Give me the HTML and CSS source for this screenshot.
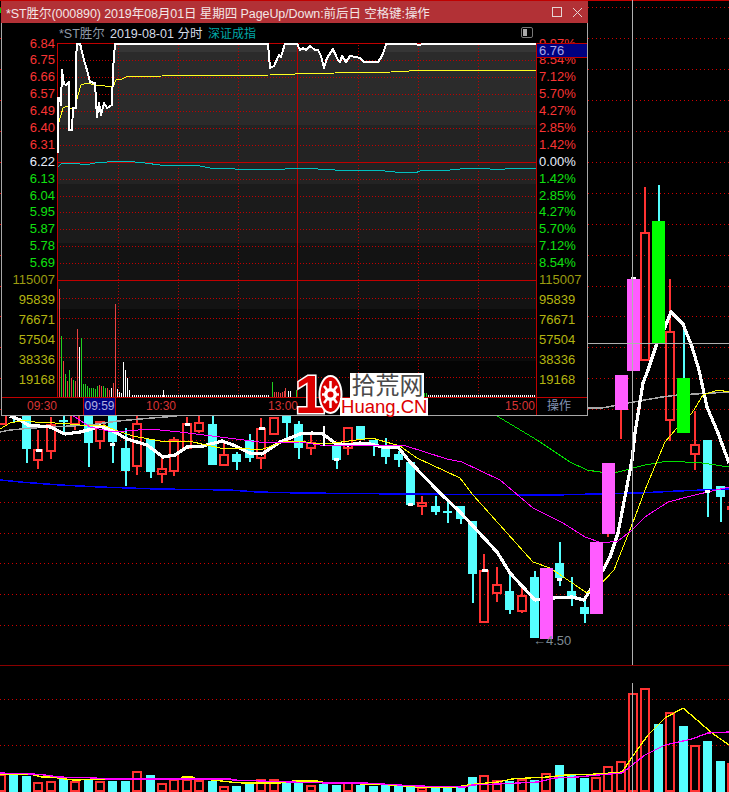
FILE: index.html
```html
<!DOCTYPE html>
<html lang="zh-CN">
<head>
<meta charset="utf-8">
<title>*ST胜尔 K线</title>
<link rel="stylesheet" href="styles.css">
</head>
<body>
<main class="screen">
  <svg class="kline" viewBox="0 0 729 792" width="729" height="792" aria-hidden="true">
    <defs>
      <pattern id="bgdot" width="4" height="1" patternUnits="userSpaceOnUse"><rect width="1" height="1" class="bgdot"/></pattern>
    </defs>
    <rect x="0" y="0" width="729" height="1" class="edge"/>
    <rect x="0" y="8" width="1" height="5" class="mark"/>
    <path fill="url(#bgdot)" d="M0 7h729v1h-729zM0 38h729v1h-729zM0 69h729v1h-729zM0 100h729v1h-729zM0 131h729v1h-729zM0 162h729v1h-729zM0 193h729v1h-729zM0 224h729v1h-729zM0 255h729v1h-729zM0 286h729v1h-729zM0 316h729v1h-729zM0 347h729v1h-729zM0 378h729v1h-729zM0 409h729v1h-729zM0 440h729v1h-729zM0 471h729v1h-729zM0 502h729v1h-729zM0 533h729v1h-729zM0 563h729v1h-729zM0 594h729v1h-729zM0 625h729v1h-729zM0 699h729v1h-729zM0 745h729v1h-729z"/>
    <rect x="0" y="665" width="729" height="1" class="rule"/>
    <path class="cy" d="M13 416h2v7h-2zM22 416h9v33h-9zM26 449h2v14h-2zM63 415h2v18h-2zM59 420h9v2h-9zM84 416h9v27h-9zM88 443h2v24h-2zM108 416h9v26h-9zM112 442h2v21h-2zM121 448h9v23h-9zM125 428h2v58h-2zM146 439h9v33h-9zM150 472h2v6h-2zM208 424h9v41h-9zM212 415h2v9h-2zM232 454h9v8h-9zM236 452h2v18h-2zM245 440h9v18h-9zM249 434h2v28h-2zM282 416h9v7h-9zM286 423h2v15h-2zM294 424h9v24h-9zM298 421h2v38h-2zM332 446h9v14h-9zM336 460h2v9h-2zM356 426h9v14h-9zM369 440h9v6h-9zM373 446h2v10h-2zM381 446h9v11h-9zM385 438h2v26h-2zM394 454h9v6h-9zM398 451h2v16h-2zM406 462h9v43h-9zM431 506h9v6h-9zM435 496h2v19h-2zM443 511h9v2h-9zM447 500h2v23h-2zM456 506h9v13h-9zM460 519h2v5h-2zM468 521h9v53h-9zM472 574h2v29h-2zM505 591h9v19h-9zM509 574h2v40h-2zM530 577h9v61h-9zM534 571h2v6h-2zM555 563h9v15h-9zM559 542h2v44h-2zM567 591h9v6h-9zM571 577h2v29h-2zM580 607h9v7h-9zM584 597h2v26h-2zM703 440h9v50h-9zM707 493h2v24h-2zM716 486h9v11h-9zM720 497h2v25h-2zM683 325h2v53h-2zM658 185h2v36h-2z"/>
    <path class="cy" d="M9 775h9v17h-9zM22 776h9v16h-9zM59 779h9v13h-9zM84 779h9v13h-9zM108 781h9v11h-9zM121 781h9v11h-9zM146 775h9v17h-9zM208 781h9v11h-9zM232 786h9v6h-9zM245 784h9v8h-9zM282 783h9v9h-9zM294 783h9v9h-9zM319 784h9v8h-9zM332 785h9v7h-9zM356 785h9v7h-9zM369 786h9v6h-9zM381 785h9v7h-9zM394 785h9v7h-9zM406 785h9v7h-9zM431 787h9v5h-9zM443 787h9v5h-9zM456 787h9v5h-9zM468 777h9v15h-9zM505 781h9v11h-9zM530 780h9v12h-9zM555 765h9v27h-9zM567 775h9v17h-9zM580 778h9v14h-9zM654 724h9v68h-9zM679 726h9v66h-9zM703 741h9v51h-9zM716 761h9v31h-9z"/>
    <path class="rd" d="M-1 416V424H6V416M38 430V450M34 450h8v10h-8zM38 460V469M47 425h8v26h-8zM51 417V425M51 451V459M71 416V424H79V416M75 424V430M96 422h8v19h-8zM100 441V449M133 424h8v42h-8zM137 415V424M137 466V475M158 469h8v5h-8zM162 456V469M162 474V483M170 440h8v31h-8zM174 437V440M174 471V476M183 424h8v24h-8zM187 417V424M195 423h8v8h-8zM199 415V423M199 431V433M220 455h8v10h-8zM224 443V455M257 429h8v29h-8zM261 418V429M261 458V469M270 418h8v16h-8zM307 443h8v5h-8zM311 434V443M311 448V455M344 428h8v20h-8zM348 448V455M418 503h8v3h-8zM422 496V503M422 506V515M480 571h8v51h-8zM484 554V571M493 585h8v8h-8zM497 567V585M497 593V602M518 596h8v15h-8zM522 587V596M522 611V613M641 233h8v127h-8zM645 187V233M666 332h8v88h-8zM670 279V332M670 420V441M691 445h8v9h-8zM695 411V445M695 454V470M608 534V537M621 410V439"/>
    <path class="rd" d="M-2 775h7V791h-7zM34 783h8V791h-8zM47 782h8V791h-8zM71 782h8V791h-8zM96 782h8V791h-8zM133 772h8V791h-8zM158 784h8V791h-8zM170 780h8V791h-8zM183 780h8V791h-8zM195 781h8V791h-8zM220 787h8V791h-8zM257 780h8V791h-8zM270 780h8V791h-8zM307 786h8V791h-8zM344 783h8V791h-8zM418 788h8V791h-8zM480 776h8V791h-8zM493 781h8V791h-8zM518 780h8V791h-8zM542 774h8V791h-8zM592 778h8V791h-8zM604 767h8V791h-8zM617 762h8V791h-8zM629 694h8V791h-8zM641 689h8V791h-8zM666 713h8V791h-8zM691 746h8V791h-8zM728 764h8V791h-8z"/>
    <path class="gy" d="M0 432L10 430L33 428L90 425L118 421L140 419L177 416M588 408L602 408L628 403L662 397L678 395L729 392"/>
    <path class="gn" d="M497 416L537 440L570 462L587 470L600 472L618 472L645 465L668 461L702 463L729 467"/>
    <path class="bl" d="M0 480L20 482L60 485L100 487L157 489L230 490L257 492L300 493L403 494L553 495L638 493L678 491L729 489"/>
    <path class="ma5" d="M10 416L20 420L28 425L50 427L65 434L80 432L88 430L100 426L115 432L127 439L147 445L163 457L175 455L187 447L203 446L222 441L233 445L250 453L262 454L280 442L300 434L312 433L323 434L335 443L348 445L360 443L370 444L383 447L398 447L410 462L440 493L460 512L497 552L510 573L535 600L553 598L572 597L584 600L589 592L603 570L610 557L618 533L623 507L632 460L635 433L643 383L648 370L657 343L665 327L671 312L683 324L692 347L699 370L707 407L718 433L729 463"/>
    <path class="ye" d="M0 429L10 423L25 420L35 422L55 423L70 424L90 426L103 425L115 430L133 436L160 441L193 442L220 448L250 449L263 449L283 442L300 441L317 444L333 443L372 438L400 446L417 458L460 478L473 495L507 533L533 562L550 568L587 593L600 585L614 570L635 517L645 490L665 442L677 428L692 413L703 395L718 390L729 392"/>
    <path class="mg" d="M72 415L90 427L113 432L150 429L180 432L220 437L267 443L300 442L320 445L403 445L447 459L462 462L500 480L533 508L563 523L585 537L602 543L618 541L632 530L645 517L668 502L695 495L729 487"/>
    <path class="ye low-line" d="M0 774L30 774L42 777L48 777L58 778L73 780L133 779L180 779L182 777L192 777L197 779L213 780L230 782L243 783L280 783L293 781L317 781L328 783L365 784L392 785L417 787L455 787L475 784L498 782L512 779L528 778L548 777L565 775L598 774L622 772L635 753L648 735L665 718L683 708L712 733L729 745"/>
    <path class="mg low-line" d="M0 773L33 774L45 775L58 777L95 778L107 779L193 779L230 779L233 780L290 782L327 783L365 783L417 786L465 787L472 785L498 784L538 782L555 778L578 777L598 775L622 773L645 755L665 745L692 739L708 733L729 732"/>
    <path class="pk" d="M540 568h13v71h-13zM590 542h13v72h-13zM602 463h13v71h-13zM615 375h13v35h-13zM627 279h13v92h-13z"/>
    <path class="gb" d="M652 221h13v122h-13zM677 378h13v55h-13z"/>
    <rect x="727" y="506" width="2" height="4" class="rf"/>
    <path class="wm" d="M36 449h6v3h-6zM110 443h5v3h-5zM185 423h5v3h-5zM259 427h6v3h-6zM334 458h5v3h-5zM408 503h5v3h-5zM482 569h6v3h-6zM557 578h5v3h-5zM705 490h5v3h-5zM323 426h2v20h-2zM631 277h5v2h-5z"/>
    <path class="cross" d="M632 0h1v665h-1zM632 683h1v109h-1zM588 343h141v1h-141z"/>
    <text x="533" y="645" class="low">←4.50</text>
  </svg>

  <section class="win">
    <header class="title">
      <span class="title-text">*ST胜尔(000890) 2019年08月01日 星期四 PageUp/Down:前后日 空格键:操作</span>
      <div class="win-btns">
        <svg width="11" height="11" viewBox="0 0 11 11"><rect x="0.5" y="0.5" width="9" height="9" class="btn-line"/></svg>
        <svg width="11" height="11" viewBox="0 0 11 11"><path d="M1 1L10 10M10 1L1 10" class="btn-line"/></svg>
      </div>
    </header>
    <div class="content">
      <div class="sub">
        <span class="sub-name">*ST胜尔</span>
        <span class="sub-date">2019-08-01 分时</span>
        <span class="sub-index">深证成指</span>
        <svg class="sub-icon" width="12" height="11" viewBox="0 0 12 11"><rect x="0.5" y="0.5" width="11" height="10" rx="1.5" class="ic-box"/><rect x="2" y="2" width="4" height="7" class="ic-fill"/></svg>
      </div>
      <div class="body">
        <div class="axis axis-left">
          <span class="up">6.84</span><span class="up">6.75</span><span class="up">6.66</span><span class="up">6.57</span><span class="up">6.49</span><span class="up">6.40</span><span class="up">6.31</span><span class="flat">6.22</span><span class="dn">6.13</span><span class="dn">6.04</span><span class="dn">5.95</span><span class="dn">5.87</span><span class="dn">5.78</span><span class="dn">5.69</span>
          <span class="vol-top">115007</span><span class="vol">95839</span><span class="vol">76671</span><span class="vol">57504</span><span class="vol">38336</span><span class="vol">19168</span>
        </div>
        <svg class="plot" viewBox="57 43 480 354" width="480" height="354" aria-hidden="true">
          <defs>
            <pattern id="pdh" width="3" height="1" patternUnits="userSpaceOnUse"><rect width="1" height="1" class="pdot"/></pattern>
            <pattern id="pdv" width="1" height="3" patternUnits="userSpaceOnUse"><rect width="1" height="1" class="pdot"/></pattern>
            <pattern id="vd" width="2" height="1" patternUnits="userSpaceOnUse"><rect width="1" height="1" class="vdot"/></pattern>
          </defs>
          <rect x="57" y="43" width="480" height="9" class="b1"/>
          <rect x="57" y="52" width="480" height="73" class="b2"/>
          <rect x="57" y="125" width="480" height="59" class="b3"/>
          <rect x="57" y="184" width="480" height="59" class="b4"/>
          <rect x="57" y="243" width="480" height="66" class="b5"/>
          <rect x="57" y="309" width="480" height="52" class="b6"/>
          <rect x="57" y="361" width="480" height="36" class="b7"/>
          <path class="sky" d="M58 153L58 98L60 98L61 105L62 70L64 84L66 85L69 82L69 130L72 130L73 108L76 108L76 60L77 43L80 43L84 60L87 70L90 82L95 83L96 100L97 117L99 103L101 115L104 103L107 108L112 105L113 70L115 43L57 43Z"/>
          <path class="sky" d="M268 43L270 68L274 66L279 55L281 57L285 43L297 43L300 50L303 48L306 50L310 46L315 50L318 50L321 56L324 68L327 58L333 49L338 60L340 62L342 56L346 62L350 56L356 57L360 58L364 62L378 62L382 56L385 48L386 43Z"/>
          <path fill="url(#pdh)" d="M57 60h479v1h-479zM57 77h479v1h-479zM57 94h479v1h-479zM57 111h479v1h-479zM57 128h479v1h-479zM57 145h479v1h-479zM57 179h479v1h-479zM57 196h479v1h-479zM57 212h479v1h-479zM57 229h479v1h-479zM57 246h479v1h-479zM57 263h479v1h-479zM57 298h479v1h-479zM57 318h479v1h-479zM57 338h479v1h-479zM57 357h479v1h-479zM57 377h479v1h-479z"/>
          <path fill="url(#pdv)" d="M118 43h1v354h-1zM178 43h1v354h-1zM238 43h1v354h-1zM358 43h1v354h-1zM418 43h1v354h-1zM478 43h1v354h-1z"/>
          <path class="prule" d="M57 43h480v1h-480zM57 162h480v1h-480zM57 280h480v1h-480zM57 43h1v354h-1zM297 43h1v354h-1zM536 43h1v354h-1z"/>
          <path class="v-r" d="M59 289h1v108h-1zM63 361h1v36h-1zM67 381h1v16h-1zM71 378h1v19h-1zM75 381h1v16h-1zM77 329h1v68h-1zM99 385h1v12h-1zM101 386h1v11h-1zM107 388h1v9h-1zM109 390h1v7h-1zM113 383h1v14h-1zM115 304h1v93h-1zM274 392h1v5h-1zM276 392h1v5h-1zM278 392h1v5h-1zM280 393h1v4h-1zM282 392h1v5h-1zM284 391h1v6h-1zM285 388h1v9h-1z"/>
          <path class="v-g" d="M61 336h1v61h-1zM65 374h1v23h-1zM69 370h1v27h-1zM73 380h1v17h-1zM81 338h1v59h-1zM83 384h1v13h-1zM85 384h1v13h-1zM87 386h1v11h-1zM89 388h1v9h-1zM91 388h1v9h-1zM93 388h1v9h-1zM95 389h1v8h-1zM97 386h1v11h-1zM103 386h1v11h-1zM105 388h1v9h-1zM272 382h1v15h-1zM296 390h1v7h-1zM424 393h1v4h-1zM426 393h1v4h-1z"/>
          <path class="v-w" d="M79 347h1v50h-1zM111 388h1v9h-1zM117 389h1v8h-1zM119 392h1v5h-1zM121 393h1v4h-1zM123 362h1v35h-1zM125 370h1v27h-1zM127 378h1v19h-1zM129 390h1v7h-1zM163 390h1v7h-1zM288 391h1v6h-1zM290 391h1v6h-1z"/>
          <path fill="url(#vd)" d="M131 395h139v2h-139zM428 395h108v2h-108z"/>
          <path class="teal" d="M58 167L61 164L70 163L80 164L85 165L95 163L120 161L135 162L145 163L160 165L195 165L210 168L225 168L245 170L255 169L270 170L300 168L318 169L335 170L375 170L395 172L415 173L420 171L435 170L450 170L470 168L490 169L505 169L536 168"/>
          <path class="avg" d="M58 125L61 115L63 108L67 106L72 109L75 108L78 95L81 85L87 83L95 85L105 86L113 87L116 80L122 79L126 77L162 76L270 75L295 74L335 73L391 72L409 71L536 70.500"/>
          <path class="price" d="M58 153L58 98L60 98L61 105L62 70L64 84L66 85L69 82L69 130L72 130L73 108L76 108L76 60L77 43.500L80 43.500L84 60L87 70L90 82L95 83L96 100L97 117L99 103L101 115L104 103L107 108L112 105L113 70L115 43.500L268 43.500L270 68L274 66L279 55L281 57L285 43.500L297 43.500L300 50L303 48L306 50L310 46L315 50L318 50L321 56L324 68L327 58L333 49L338 60L340 62L342 56L346 62L350 56L356 57L360 58L364 62L378 62L382 56L385 48L386 43.500L416 43.500L417 44.500L421 44.500L424 43.500L429 44L536 44"/>
        </svg>
        <div class="axis axis-right">
          <span class="up">9.97%</span><span class="up">8.54%</span><span class="up">7.12%</span><span class="up">5.70%</span><span class="up">4.27%</span><span class="up">2.85%</span><span class="up">1.42%</span><span class="flat">0.00%</span><span class="dn">1.42%</span><span class="dn">2.85%</span><span class="dn">4.27%</span><span class="dn">5.70%</span><span class="dn">7.12%</span><span class="dn">8.54%</span>
          <span class="vol-top">115007</span><span class="vol">95839</span><span class="vol">76671</span><span class="vol">57504</span><span class="vol">38336</span><span class="vol">19168</span>
        </div>
        <div class="price-tag">6.76</div>
      </div>
      <div class="times">
        <span class="tm t-a">09:30</span>
        <span class="tm t-sel">09:59</span>
        <span class="tm t-b">10:30</span>
        <span class="tm t-c">13:00</span>
        <span class="tm t-d">15:00</span>
        <span class="t-op">操作</span>
      </div>
    </div>
    <div class="logo">
      <div class="logo-ten">
        <span class="logo-one">1</span>
        <svg class="logo-zero" width="25" height="41" viewBox="0 0 25 41"><ellipse cx="12.500" cy="20.500" rx="11" ry="18.500" class="z-red"/><path class="z-white" d="M12.500 7v27M4 20.500h17M6 12l13 17M19 12L6 29"/><circle cx="12.500" cy="20.500" r="6.500" class="z-disc"/><circle cx="12.500" cy="20.500" r="3" class="z-dot"/></svg>
      </div>
      <div class="logo-text">
        <div class="logo-cn">拾荒网</div>
        <div class="logo-en">Huang.CN</div>
      </div>
    </div>
  </section>
</main>
</body>
</html>
```
FILE: styles.css
```css
html, body { margin: 0; padding: 0; background: #000; }
body { width: 729px; height: 792px; overflow: hidden; font-family: "Liberation Sans", "Noto Sans CJK SC", sans-serif; }
.screen { position: relative; width: 729px; height: 792px; background: #000; overflow: hidden; }
.kline { display: block; shape-rendering: crispEdges; }
.edge { fill: #c00000; }
.mark { fill: #00d000; }
.bgdot { fill: #d00000; }
.rule { fill: #8a0000; }
.cy { fill: #55ffff; }
.rd { fill: none; stroke: #ff3232; stroke-width: 2; }
.rf { fill: #ff3232; }
.pk { fill: #ff5cff; }
.gb { fill: #00ff00; }
.wm { fill: #fff; }
.gy { fill: none; stroke: #a8a8a8; stroke-width: 1.500; }
.gn { fill: none; stroke: #00e000; stroke-width: 1; }
.bl { fill: none; stroke: #0000ff; stroke-width: 1.500; }
.ye { fill: none; stroke: #ffff00; stroke-width: 1; }
.mg { fill: none; stroke: #ff00ff; stroke-width: 1; }
.low-line { stroke-width: 1.300; }
.ma5 { fill: none; stroke: #fff; stroke-width: 3.200; stroke-linejoin: round; }
.cross { fill: #b0b0b0; }
.low { fill: #7f8a94; font-size: 13px; font-family: "Liberation Sans", sans-serif; }

.win { position: absolute; left: 1px; top: 1px; width: 587px; height: 415px; display: flex; flex-direction: column; background: #000; }
.title { height: 22px; flex: none; background: #b23136; color: #f3e6e6; display: flex; align-items: center; justify-content: space-between; padding: 0 5px 0 5px; box-sizing: border-box; font-size: 12.500px; letter-spacing: -0.08px; white-space: nowrap; }
.win-btns { display: flex; gap: 9px; align-items: center; }
.win-btns svg { display: block; }
.btn-line { fill: none; stroke: #e6d6d6; stroke-width: 1; }
.content { flex: 1; display: flex; flex-direction: column; border: 1px solid #a8a8a8; border-top: 0; min-height: 0; }
.sub { height: 20px; padding-bottom: 2px; box-sizing: border-box; flex: none; display: flex; align-items: center; font-size: 12.500px; white-space: nowrap; padding-left: 57px; position: relative; z-index: 1; }
.sub-name { color: #8f9aa8; width: 51px; }
.sub-date { color: #d5dbe6; width: 98px; }
.sub-index { color: #00a8a8; font-size: 12px; }
.sub-icon { margin-left: auto; margin-right: 54px; }
.ic-box { fill: none; stroke: #777; }
.ic-fill { fill: #aaa; }
.body { flex: none; height: 354px; display: flex; position: relative; }
.axis { flex: none; margin-top: -8.500px; height: 362px; display: grid; grid-template-rows: repeat(14, 16.900px) repeat(6, 20px); font-size: 13px; line-height: 17px; }
.axis span { display: block; }
.axis-left { width: 55px; text-align: right; box-sizing: border-box; padding-right: 2px; }
.axis-right { width: 50px; padding-left: 2px; box-sizing: border-box; }
.plot { display: block; flex: none; shape-rendering: crispEdges; }
.up { color: #f83434; }
.flat { color: #e8eefc; }
.dn { color: #10e010; }
.vol-top { color: #9c9c10; }
.vol { color: #b4b410; }
.b1 { fill: #363636; }
.b2 { fill: #2b2b2b; }
.b3 { fill: #232323; }
.b4 { fill: #1b1b1b; }
.b5 { fill: #131313; }
.b6 { fill: #0b0b0b; }
.b7 { fill: #040404; }
.sky { fill: #000; }
.pdot { fill: #c00000; }
.vdot { fill: #fff; }
.prule { fill: #c00000; }
.v-r { fill: #e84040; }
.v-g { fill: #20d020; }
.v-w { fill: #fff; }
.teal { fill: none; stroke: #00c0c0; stroke-width: 1; }
.avg { fill: none; stroke: #ffff20; stroke-width: 1; }
.price { fill: none; stroke: #fff; stroke-width: 2; stroke-linejoin: round; }
.price-tag { position: absolute; left: 535px; top: 0; width: 50px; height: 15px; box-sizing: border-box; background: #000080; border-top: 1px solid #c00000; border-bottom: 1px solid #c00000; color: #a8a8e8; font-size: 13px; line-height: 13px; padding-left: 2px; }
.times { flex: 1; display: grid; grid-template-columns: 25px 56px 33px 30px 122px 237px 31px 1px 1fr; border-top: 1px solid #c00000; font-size: 12px; line-height: 17px; }
.tm { color: #d83434; }
.t-a { grid-column: 2; }
.t-sel { grid-column: 3; background: #000080; color: #b0b0e0; border-left: 1px solid #c00000; border-right: 1px solid #c00000; text-align: center; }
.t-b { grid-column: 5; }
.t-c { grid-column: 6; }
.t-d { grid-column: 7; }
.t-op { grid-column: 9; color: #8494b4; border-left: 1px solid #c00000; padding-left: 10px; font-size: 12px; margin-left: -1px; }

.logo { position: absolute; left: 294px; top: 372px; display: flex; gap: 4px; align-items: flex-end; }
.logo-ten { display: flex; align-items: center; height: 43px; }
.logo-one { font-size: 54px; line-height: 43px; font-weight: 700; color: #dc0000; -webkit-text-stroke: 3px #fff; paint-order: stroke fill; margin-right: -7px; }
.logo-zero { display: block; }
.z-red { fill: #dc0000; stroke: #fff; stroke-width: 2; }
.z-white { stroke: #fff; stroke-width: 2.500; fill: none; }
.z-disc { fill: #fff; }
.z-dot { fill: #dc0000; }
.logo-text { display: flex; flex-direction: column; align-items: flex-end; margin-left: -7px; }
.logo-cn { font-size: 24px; line-height: 25px; color: #4a4a4a; background: #fff; padding: 0 1px; margin-right: 4px; }
.logo-en { font-size: 18.500px; line-height: 18px; color: #dc0000; background: #fff; padding: 0 1px; }
```
